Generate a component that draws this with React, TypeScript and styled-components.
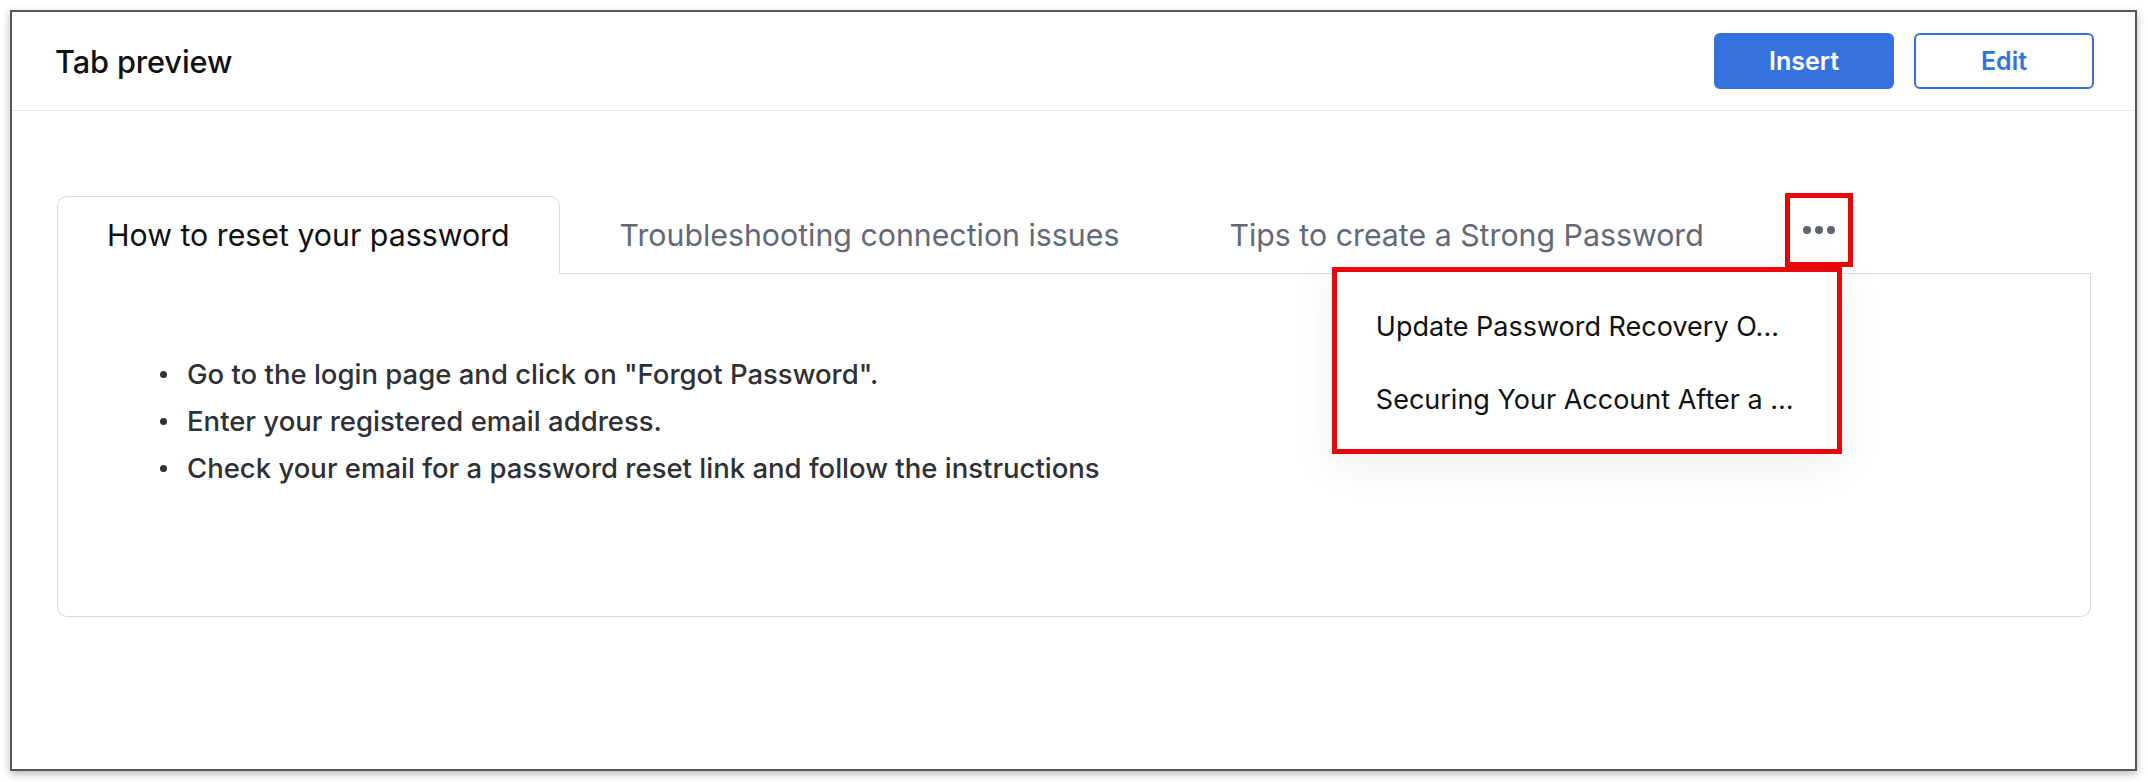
import React from "react";
import styled, { createGlobalStyle } from "styled-components";

const GlobalStyle = createGlobalStyle`
  html, body {
    margin: 0;
    padding: 0;
    background: #ffffff;
  }
  body {
    font-family: "Inter", "Liberation Sans", sans-serif;
    color: #111111;
  }
  * { box-sizing: border-box; }
`;

const Page = styled.div`
  padding: 10px 11px 11px 10px;
`;

const Frame = styled.div`
  height: 761px;
  border: 2px solid #575757;
  box-shadow: 0 3px 8px rgba(0, 0, 0, 0.28);
  background: #ffffff;
  display: flex;
  flex-direction: column;
`;

const Header = styled.header`
  height: 99px;
  flex: none;
  display: flex;
  align-items: center;
  justify-content: space-between;
  padding: 0 41px 0 43px;
  border-bottom: 1px solid #e7e8ed;
`;

const Title = styled.h1`
  margin: 0;
  font-size: 30.7px;
  font-weight: 500;
  color: #111111;
  letter-spacing: -0.1px;
`;

const Actions = styled.div`
  display: flex;
  gap: 20px;
  margin-top: -1px;
`;

const Button = styled.button<{ $primary?: boolean }>`
  width: 180px;
  height: 56px;
  border-radius: 6px;
  font-family: "Inter", "Liberation Sans", sans-serif;
  font-size: 25px;
  font-weight: 600;
  cursor: pointer;
  border: 2px solid #3572e0;
  background: ${(p) => (p.$primary ? "#3572e0" : "#ffffff")};
  color: ${(p) => (p.$primary ? "#ffffff" : "#3572e0")};
`;

const Content = styled.div`
  padding: 82px 44px 0 45px;
`;

const TabRow = styled.div`
  display: flex;
  align-items: flex-end;
  gap: 10px;
  border-bottom: 1px solid #d7dbe5;
`;

const Tab = styled.div<{ $active?: boolean }>`
  height: 78px;
  margin-bottom: -1px;
  padding: 0 49px;
  display: flex;
  align-items: center;
  font-size: 30.3px;
  white-space: nowrap;
  border: 1px solid ${(p) => (p.$active ? "#d7dbe5" : "transparent")};
  border-bottom: 1px solid ${(p) => (p.$active ? "#ffffff" : "transparent")};
  border-radius: 10px 10px 0 0;
  background: ${(p) => (p.$active ? "#ffffff" : "transparent")};
  color: ${(p) => (p.$active ? "#111111" : "#646977")};
`;

const MoreWrap = styled.div`
  position: relative;
  margin-left: 21px;
  margin-bottom: 6px;
`;

const MoreButton = styled.div`
  width: 68px;
  height: 74px;
  border: 5px solid #e8070b;
  display: flex;
  align-items: center;
  justify-content: center;
  background: #ffffff;
`;

const Menu = styled.div`
  position: absolute;
  top: 100%;
  right: 11px;
  width: 510px;
  height: 187px;
  border: 5px solid #e8070b;
  background: #ffffff;
  padding: 18px 0 13px;
  box-shadow: 0 10px 40px rgba(30, 40, 70, 0.08);
  z-index: 2;
`;

const MenuItem = styled.div`
  padding: 0 39px;
  line-height: 73px;
  font-size: 27px;
  color: #111111;
  white-space: nowrap;
`;

const Panel = styled.div`
  height: 343px;
  border: 1px solid #d7dbe5;
  border-top: none;
  border-radius: 0 0 10px 10px;
  padding: 77px 0 0 102px;
`;

const List = styled.ul`
  margin: 0;
  padding: 0;
  list-style: none;
`;

const Item = styled.li`
  display: flex;
  align-items: center;
  gap: 20px;
  line-height: 47px;
  font-size: 27.5px;
  font-weight: 500;
  color: #303135;
`;

const Bullet = styled.span`
  width: 7px;
  height: 7px;
  border-radius: 50%;
  background: #303135;
  flex: none;
`;

const Dots = () => (
  <svg width="32" height="8" viewBox="0 0 32 8" aria-hidden="true">
    <circle cx="4" cy="4" r="4" fill="#5f6370" />
    <circle cx="16" cy="4" r="4" fill="#5f6370" />
    <circle cx="28" cy="4" r="4" fill="#5f6370" />
  </svg>
);

const tabs = [
  "How to reset your password",
  "Troubleshooting connection issues",
  "Tips to create a Strong Password",
];

const steps = [
  'Go to the login page and click on "Forgot Password".',
  "Enter your registered email address.",
  "Check your email for a password reset link and follow the instructions",
];

const menuItems = [
  "Update Password Recovery O...",
  "Securing Your Account After a ...",
];

export default function App() {
  return (
    <>
      <GlobalStyle />
      <Page>
        <Frame>
          <Header>
            <Title>Tab preview</Title>
            <Actions>
              <Button $primary>Insert</Button>
              <Button>Edit</Button>
            </Actions>
          </Header>
          <Content>
            <TabRow>
              {tabs.map((t, i) => (
                <Tab key={t} $active={i === 0}>
                  {t}
                </Tab>
              ))}
              <MoreWrap>
                <MoreButton>
                  <Dots />
                </MoreButton>
                <Menu>
                  {menuItems.map((m) => (
                    <MenuItem key={m}>{m}</MenuItem>
                  ))}
                </Menu>
              </MoreWrap>
            </TabRow>
            <Panel>
              <List>
                {steps.map((s) => (
                  <Item key={s}>
                    <Bullet />
                    {s}
                  </Item>
                ))}
              </List>
            </Panel>
          </Content>
        </Frame>
      </Page>
    </>
  );
}
